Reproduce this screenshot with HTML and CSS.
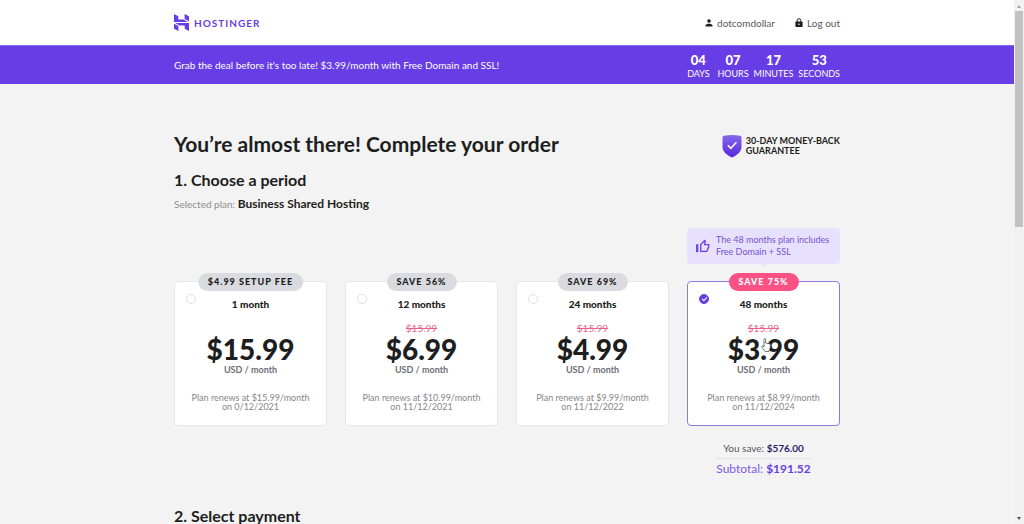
FILE: index.html
```html
<!DOCTYPE html>
<html lang="en">
<head>
    <meta charset="UTF-8">
    <meta name="viewport" content="width=device-width, initial-scale=1">
    <title>Hostinger - Complete your order</title>
    <link rel="stylesheet" href="styles.css">
</head>
<body>
    <div class="page">
        <header class="header">
            <div class="container header-row">
                <a href="#" class="logo">
                    <svg width="15" height="17" viewBox="0 0 15 17" fill="#673de6" aria-hidden="true">
                        <path d="M0 8V0l4.300 2.200v3.400h5.400l4.100 2.400zM10.600 4.900V0L15 2.300v4.900z"/>
                        <path d="M15 9v8l-4.300-2.200v-3.400H5.300L1.200 9zM4.400 12.100V17L0 14.700V9.800z"/>
                    </svg>
                    <span>HOSTINGER</span>
                </a>
                <nav class="user-nav">
                    <a href="#">
                        <svg width="8" height="8" viewBox="0 0 8 8" fill="#1d1e20" aria-hidden="true"><circle cx="4" cy="2" r="1.800"/><path d="M.5 7.500V6.400C.5 5.200 2.600 4.700 4 4.700s3.500.5 3.500 1.700v1.100z"/></svg>
                        dotcomdollar
                    </a>
                    <a href="#">
                        <svg width="8" height="10" viewBox="0 0 8 10" aria-hidden="true"><path d="M2.200 4V2.500a1.800 1.800 0 0 1 3.600 0V4" fill="none" stroke="#1d1e20"/><rect x=".4" y="3.400" width="7.200" height="5.600" rx=".8" fill="#1d1e20"/><circle cx="4" cy="6.200" r=".8" fill="#fff"/></svg>
                        Log out
                    </a>
                </nav>
            </div>
        </header>

        <div class="banner">
            <div class="container banner-row">
                <p>Grab the deal before it's too late! $3.99/month with Free Domain and SSL!</p>
                <div class="countdown">
                    <div class="unit"><strong>04</strong><span>DAYS</span></div>
                    <div class="unit"><strong>07</strong><span>HOURS</span></div>
                    <div class="unit"><strong>17</strong><span>MINUTES</span></div>
                    <div class="unit"><strong>53</strong><span>SECONDS</span></div>
                </div>
            </div>
        </div>

        <main class="container main">
            <div class="title-row">
                <h1>You’re almost there! Complete your order</h1>
                <div class="guarantee">
                    <svg width="20" height="23" viewBox="0 0 20 23" aria-hidden="true">
                        <defs><linearGradient id="shield" x1="0" y1="0" x2="0" y2="1"><stop offset="0" stop-color="#8568ea"/><stop offset="1" stop-color="#5728df"/></linearGradient></defs>
                        <path d="M2 .8Q10-.6 18 .8q1.5.3 1.5 1.7V12c0 5-5 8.500-9.500 10.500C5.500 20.500.500 17 .500 12V2.500Q.500 1.100 2 .8z" fill="url(#shield)"/>
                        <path d="M5.800 10.300l3 3 5.600-6" fill="none" stroke="#fff" stroke-width="1.500"/>
                    </svg>
                    <span>30-DAY MONEY-BACK<br>GUARANTEE</span>
                </div>
            </div>

            <h2>1. Choose a period</h2>
            <p class="selected">Selected plan: <strong>Business Shared Hosting</strong></p>

            <form class="plans">
                <div class="tip">
                    <svg width="14" height="14" viewBox="0 0 14 14" fill="none" stroke="#673de6" stroke-width="1.300" aria-hidden="true">
                        <path d="M1.200 5.200v8" stroke-width="2.200"/>
                        <path d="M4.700 5.600L8.600 1.500l.7.7-.8 3.400h4.300v1.900L10.900 12.300H4.700z" stroke-linejoin="round"/>
                    </svg>
                    <span>The 48 months plan includes Free Domain + SSL</span>
                </div>

                <label class="plan">
                    <span class="badge">$4.99 SETUP FEE</span>
                    <input type="radio" name="period" value="1">
                    <span class="name">1 month</span>
                    <span class="old-price"></span>
                    <span class="price">$15.99</span>
                    <span class="per">USD / month</span>
                    <span class="renews">Plan renews at $15.99/month<br>on 0/12/2021</span>
                </label>
                <label class="plan">
                    <span class="badge">SAVE 56%</span>
                    <input type="radio" name="period" value="12">
                    <span class="name">12 months</span>
                    <s class="old-price">$15.99</s>
                    <span class="price">$6.99</span>
                    <span class="per">USD / month</span>
                    <span class="renews">Plan renews at $10.99/month<br>on 11/12/2021</span>
                </label>
                <label class="plan">
                    <span class="badge">SAVE 69%</span>
                    <input type="radio" name="period" value="24">
                    <span class="name">24 months</span>
                    <s class="old-price">$15.99</s>
                    <span class="price">$4.99</span>
                    <span class="per">USD / month</span>
                    <span class="renews">Plan renews at $9.99/month<br>on 11/12/2022</span>
                </label>
                <label class="plan active">
                    <span class="badge">SAVE 75%</span>
                    <input type="radio" name="period" value="48" checked>
                    <span class="name">48 months</span>
                    <s class="old-price">$15.99</s>
                    <span class="price">$3.99</span>
                    <span class="per">USD / month</span>
                    <span class="renews">Plan renews at $8.99/month<br>on 11/12/2024</span>
                    <svg class="pointer" width="10" height="14" viewBox="0 0 10 14" aria-hidden="true"><path d="M3 8V1.500q0-1 .8-1t.8 1V5l3.600.7q1.300.3 1.200 1.600L9 10.500 8 13.500H4L1 9.300Q.2 8 1.300 7.700 2.200 7.500 3 9z" fill="#fff" stroke="#555" stroke-width=".8"/></svg>
                </label>

                <div class="totals">
                    <p class="save">You save: <strong>$576.00</strong></p>
                    <p class="subtotal">Subtotal: <strong>$191.52</strong></p>
                </div>
            </form>

            <h2>2. Select payment</h2>
        </main>
    </div>

    <div class="scrollbar" aria-hidden="true">
        <i class="arrow up"></i>
        <i class="thumb"></i>
        <i class="arrow down"></i>
    </div>
</body>
</html>
```
FILE: styles.css
```css
* {
    box-sizing: border-box;
}
body {
    margin: 0;
    height: 100vh;
    overflow: hidden;
    display: flex;
    background: #f3f3f3;
    color: #1d1e20;
    font-family: Lato, "Noto Sans", sans-serif;
    font-size: 10px;
}
p, h1, h2 {
    margin: 0;
}
a {
    color: inherit;
    text-decoration: none;
}
.page {
    flex: 1;
    min-width: 0;
    overflow: hidden;
}
.container {
    max-width: 666px;
    margin: 0 auto;
}

/* header */
.header {
    background: #fff;
}
.header-row {
    height: 45px;
    display: flex;
    align-items: center;
    justify-content: space-between;
}
.logo {
    display: flex;
    align-items: center;
    gap: 5px;
    color: #673de6;
    font-size: 10px;
    font-weight: 700;
    letter-spacing: 1px;
}
.user-nav {
    display: flex;
    gap: 20px;
    color: #56575c;
}
.user-nav a {
    display: flex;
    align-items: center;
    gap: 4px;
}

/* countdown banner */
.banner {
    background: #673de6;
    border-top: 1px solid #8a6cec;
    color: #fff;
}
.banner-row {
    height: 38px;
    display: flex;
    align-items: center;
    justify-content: space-between;
}
.countdown {
    display: flex;
    gap: 5px;
    padding-top: 3px;
    text-align: center;
}
.unit {
    min-width: 28px;
}
.unit strong, .unit span {
    display: block;
}
.unit strong {
    font-size: 13px;
    font-weight: 900;
    line-height: 14px;
}
.unit span {
    font-size: 9px;
    line-height: 14px;
}

/* main */
.main {
    padding-top: 44px;
}
.title-row {
    display: flex;
    align-items: center;
    justify-content: space-between;
    height: 32px;
}
h1 {
    font-size: 21px;
    line-height: 32px;
}
h2 {
    font-size: 16px;
    line-height: 20px;
    margin-top: 10px;
}
.guarantee {
    display: flex;
    align-items: center;
    gap: 4px;
    padding-top: 4px;
    font-size: 9px;
    font-weight: 700;
    line-height: 10px;
}
.selected {
    margin-top: 6px;
    line-height: 16px;
    color: #8d8e92;
}
.selected strong {
    font-size: 12px;
    color: #1d1e20;
}

/* plans */
.plans {
    display: grid;
    grid-template-columns: repeat(4, 1fr);
    column-gap: 18px;
    margin-top: 16px;
}
.tip {
    grid-column: 4;
    position: relative;
    display: flex;
    align-items: center;
    gap: 6px;
    height: 36px;
    padding: 0 9px;
    margin-bottom: 17px;
    border-radius: 4px;
    background: #e8e0ff;
    color: #7454cf;
    font-size: 9px;
    line-height: 12px;
}
.tip svg {
    flex: none;
}
.tip::after {
    content: "";
    position: absolute;
    left: 50%;
    top: 100%;
    margin-left: -3px;
    border: 3px solid transparent;
    border-top-color: #e8e0ff;
    border-bottom: 0;
}
.plan {
    position: relative;
    display: flex;
    flex-direction: column;
    align-items: center;
    padding: 15px 5px 14px;
    background: #fff;
    border: 1px solid #e6e6e9;
    border-radius: 4px;
    text-align: center;
    cursor: pointer;
}
.plan.active {
    border-color: #8f77dc;
}
.badge {
    position: absolute;
    top: -9px;
    left: 50%;
    transform: translateX(-50%);
    padding: 0 10px;
    border-radius: 9px;
    background: #dadbe0;
    font-size: 9px;
    font-weight: 900;
    letter-spacing: 1px;
    line-height: 18px;
    white-space: nowrap;
}
.active .badge {
    background: #fc5185;
    color: #fff;
}
.plan input {
    appearance: none;
    position: absolute;
    top: 12px;
    left: 11px;
    width: 10px;
    height: 10px;
    margin: 0;
    border: 1px solid #e0e1e5;
    border-radius: 50%;
}
.plan input:checked {
    border-color: #673de6;
    background: #673de6;
}
.plan input:checked::after {
    content: "";
    position: absolute;
    left: 2px;
    top: 2px;
    width: 4px;
    height: 2px;
    border: solid #fff;
    border-width: 0 0 1px 1px;
    transform: rotate(-45deg);
}
.name {
    font-weight: 900;
    line-height: 14px;
}
.old-price {
    height: 12px;
    margin-top: 11px;
    color: #e8638c;
    line-height: 12px;
}
.price {
    font-size: 28px;
    font-weight: 900;
    line-height: 30px;
}
.per {
    color: #6d6e75;
    font-size: 9px;
    font-weight: 700;
    line-height: 12px;
}
.renews {
    margin-top: 17px;
    color: #85868b;
    font-size: 9px;
    line-height: 9px;
}
.pointer {
    position: absolute;
    left: 50%;
    top: 56px;
    margin-left: -3px;
}
.totals {
    grid-column: 4;
    justify-self: center;
    margin-top: 15px;
    text-align: center;
}
.save {
    padding-bottom: 3px;
    border-bottom: 1px solid #e2e2e4;
    line-height: 14px;
    color: #56575c;
}
.save strong {
    color: #2f1c6a;
}
.subtotal {
    margin-top: 1px;
    color: #7c59e8;
    font-size: 12px;
    line-height: 18px;
}
.subtotal strong {
    color: #673de6;
}
.plans + h2 {
    margin-top: 28px;
}

/* scrollbar */
.scrollbar {
    flex: none;
    display: flex;
    flex-direction: column;
    align-items: center;
    gap: 3px;
    width: 10px;
    padding: 5px 0 4px;
    background: #f1f1f1;
}
.thumb {
    width: 8px;
    height: 42%;
    background: #c1c1c1;
}
.arrow {
    border: 2px solid transparent;
}
.arrow.up {
    border-top: 0;
    border-bottom: 3px solid #a3a3a3;
}
.arrow.down {
    margin-top: auto;
    border-bottom: 0;
    border-top: 3px solid #505050;
}
```
